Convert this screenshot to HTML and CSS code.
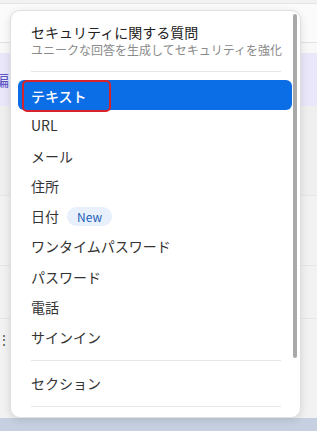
FILE: index.html
```html
<!DOCTYPE html>
<html lang="ja">
<head>
  <meta charset="UTF-8" />
  <meta name="viewport" content="width=device-width, initial-scale=1.0"/>
  <title>フィールドタイプ</title>
  <link rel="stylesheet" href="styles.css">
</head>
<body>
  <div class="page">
    <div class="top-bar"></div>
    <div class="gap"></div>
    <div class="band"><span class="band-text">編</span></div>
    <div class="rows">
      <div class="row row-a"></div>
      <div class="row row-b"></div>
      <div class="row row-c"></div>
      <div class="row row-d"><span class="dots">⋮</span></div>
    </div>
    <div class="bottom-band"></div>
  </div>

  <div class="menu">
    <div class="menu-head">
      <div class="menu-title">セキュリティに関する質問</div>
      <div class="menu-sub">ユニークな回答を生成してセキュリティを強化</div>
    </div>
    <div class="divider first"></div>
    <ul class="items">
      <li class="item selected"><span class="focus">テキスト</span></li>
      <li class="item">URL</li>
      <li class="item">メール</li>
      <li class="item">住所</li>
      <li class="item">日付 <span class="badge">New</span></li>
      <li class="item">ワンタイムパスワード</li>
      <li class="item">パスワード</li>
      <li class="item">電話</li>
      <li class="item">サインイン</li>
    </ul>
    <div class="divider"></div>
    <ul class="items">
      <li class="item">セクション</li>
    </ul>
    <div class="divider"></div>
    <div class="scrollbar"></div>
  </div>
</body>
</html>
```

FILE: styles.css
```css
body {
  margin: 0;
  font-family: "Noto Sans CJK JP", "Noto Sans", sans-serif;
  background-color: #f2f2f2;
  overflow: hidden;
}

.page {
  height: 431px;
  display: flex;
  flex-direction: column;
}

.top-bar {
  height: 38px;
  background-color: #fbfbfb;
  border-top: 1px solid #e4e4e4;
  margin-top: 3px;
  border-bottom: 1px solid #e2e2e2;
}

.gap {
  height: 10px;
  background-color: #f8f8f8;
}

.band {
  height: 53px;
  background-color: #e9e7f9;
  display: flex;
  align-items: center;
  overflow: hidden;
}

.band-text {
  margin-left: -6px;
  font-size: 15px;
  color: #5a57c8;
}

.rows {
  flex: 1;
  display: flex;
  flex-direction: column;
}

.row {
  border-bottom: 1px solid #e6e6e6;
  position: relative;
}

.row-a {
  height: 89px;
  background-color: #efefef;
}

.row-b {
  height: 69px;
}

.row-c {
  height: 52px;
}

.row-d {
  flex: 1;
  border-bottom: none;
}

.dots {
  position: absolute;
  left: -3px;
  top: 10px;
  font-size: 14px;
  color: #555;
}

.bottom-band {
  height: 13px;
  background-color: #c6d0e0;
}

.menu {
  position: absolute;
  left: 10px;
  top: 10px;
  width: 291px;
  height: 408px;
  box-sizing: border-box;
  background-color: #ffffff;
  border: 1px solid #e0e0e0;
  border-radius: 10px;
  box-shadow: 0 2px 8px rgba(0, 0, 0, 0.12);
  padding: 0 8px 0 7px;
}

.menu-head {
  padding: 11px 0 0 13px;
}

.menu-title {
  font-size: 14px;
  line-height: 20px;
  color: #222;
}

.menu-sub {
  font-size: 12px;
  line-height: 15px;
  color: #8a8a8a;
}

.divider {
  height: 1px;
  background-color: #e6e6e6;
  margin: 8px 11px 7px 13px;
}

.divider.first {
  margin-top: 14px;
  margin-bottom: 8px;
}

.items {
  list-style-type: none;
  margin: 0;
  padding: 0;
}

.item {
  height: 30px;
  line-height: 30px;
  padding-left: 13px;
  font-size: 14px;
  color: #333;
  display: flex;
  align-items: center;
  gap: 8px;
}

.item + .item {
  margin-top: 0.25px;
}

.item.selected {
  background-color: #0b6ee6;
  color: #ffffff;
  border-radius: 6px;
  padding-left: 4px;
  font-weight: 500;
}

.focus {
  display: inline-block;
  height: 28px;
  line-height: 28px;
  padding: 0 22px 0 7px;
  border: 2px solid #d8232a;
  border-radius: 5px;
  margin-top: 1px;
}

.badge {
  font-size: 12px;
  line-height: 19px;
  padding: 0 10px;
  background-color: #e8f0fc;
  color: #1d5fb8;
  border-radius: 10px;
}

.scrollbar {
  position: absolute;
  right: 3px;
  top: 3px;
  width: 4px;
  height: 344px;
  background-color: #a9a9a9;
  border-radius: 2px;
}
```
